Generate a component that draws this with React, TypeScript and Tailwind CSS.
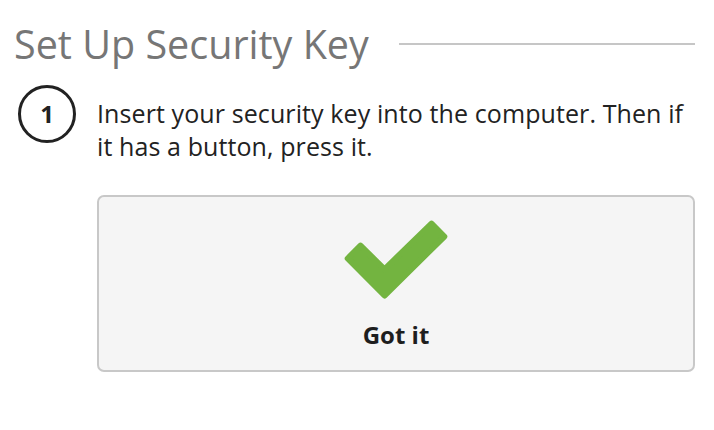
import React from 'react'

function CheckMark() {
  return (
    <svg width="112" height="88" viewBox="0 0 112 88" className="overflow-visible">
      <path
        d="M7.7 41.5 L44.5 78.5 L104.3 19.5 L91.5 6.7 L44.5 52.3 L20.5 28.7 Z"
        fill="#73b440"
        stroke="#73b440"
        strokeWidth="6"
        strokeLinejoin="round"
      />
    </svg>
  )
}

export default function App() {
  return (
    <div
      className="w-[714px] h-[430px] bg-white pl-[14px] pr-[19px] pt-[20px]"
      style={{ fontFamily: '"Open Sans", "Noto Sans", sans-serif' }}
    >
      <div className="flex items-center gap-[30px] h-[48px]">
        <h1 className="text-[39.5px] leading-[48px] text-[#767676] font-normal whitespace-nowrap">
          Set Up Security Key
        </h1>
        <div className="flex-1 h-[2px] bg-[#c6c6c6]" />
      </div>

      <div className="flex mt-[17px]">
        <div className="w-[58px] h-[58px] shrink-0 ml-[4px] rounded-full border-[3px] border-[#222] flex items-center justify-center text-[24px] leading-none font-bold text-[#222]">
          1
        </div>
        <div className="ml-[21px] flex-1">
          <p className="text-[25px] leading-[33px] tracking-[0.1px] text-[#222] pt-[12px] whitespace-nowrap">
            Insert your security key into the computer. Then if
            <br />
            it has a button, press it.
          </p>
          <button className="mt-[32px] w-full h-[177px] rounded-[7px] border-2 border-[#c8c8c8] bg-[#f5f5f5] flex flex-col items-center pt-[20px]">
            <CheckMark />
            <span className="mt-[15px] text-[24px] leading-[30px] font-bold text-[#1e1e1e]">Got it</span>
          </button>
        </div>
      </div>
    </div>
  )
}
